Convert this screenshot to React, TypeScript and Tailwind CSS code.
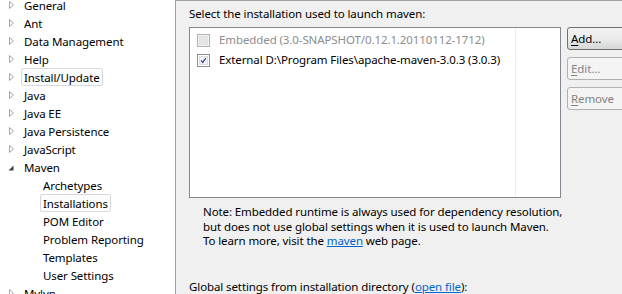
import React from "react";

const font = { fontFamily: '"Noto Sans", "Liberation Sans", sans-serif' };

type Node = { label: string; level: 0 | 1; state?: "closed" | "open"; selected?: boolean };

const nodes: Node[] = [
  { label: "General", level: 0, state: "closed" },
  { label: "Ant", level: 0, state: "closed" },
  { label: "Data Management", level: 0, state: "closed" },
  { label: "Help", level: 0, state: "closed" },
  { label: "Install/Update", level: 0, state: "closed", selected: true },
  { label: "Java", level: 0, state: "closed" },
  { label: "Java EE", level: 0, state: "closed" },
  { label: "Java Persistence", level: 0, state: "closed" },
  { label: "JavaScript", level: 0, state: "closed" },
  { label: "Maven", level: 0, state: "open" },
  { label: "Archetypes", level: 1 },
  { label: "Installations", level: 1, selected: true },
  { label: "POM Editor", level: 1 },
  { label: "Problem Reporting", level: 1 },
  { label: "Templates", level: 1 },
  { label: "User Settings", level: 1 },
  { label: "Mylyn", level: 0, state: "closed" },
];

// tree expander arrows, win7 style
const Arrow = ({ state }: { state?: "closed" | "open" }) => {
  if (!state) return <span className="w-[10px]" />;
  if (state === "open")
    return (
      <svg width="10" height="10" viewBox="0 0 10 10" className="shrink-0">
        <path d="M7.5 3.5 L7.5 8.5 L2.5 8.5 Z" fill="#404040" />
      </svg>
    );
  return (
    <svg width="10" height="10" viewBox="0 0 10 10" className="shrink-0">
      <path d="M3.5 1.5 L7.5 5 L3.5 8.5 Z" fill="none" stroke="#a6a6a6" strokeWidth="1" />
    </svg>
  );
};

const TreeRow = ({ node }: { node: Node }) => (
  <div className={`flex items-center h-[18px] whitespace-nowrap ${node.level === 1 ? "pl-[40px]" : "pl-[6px]"}`}>
    {node.level === 0 && (
      <span className="mr-[5px] flex items-center">
        <Arrow state={node.state} />
      </span>
    )}
    <span
      className={`px-[2px] h-[18px] leading-[17px] rounded-[2px] border ${
        node.selected ? "border-[#d9d9d9] bg-[#fbfcfd]" : "border-transparent"
      }`}
    >
      {node.label}
    </span>
  </div>
);

const CheckBox = ({ checked, disabled }: { checked?: boolean; disabled?: boolean }) => (
  <span
    className={`w-[13px] h-[13px] border flex items-center justify-center shrink-0 ${
      disabled ? "border-[#b1b1b1] bg-[#f4f4f4]" : "border-[#8e8f8f] bg-white"
    }`}
  >
    <span
      className={`w-[9px] h-[9px] border flex items-center justify-center ${
        disabled ? "border-[#e0e0e0] bg-[#e6e6e6]" : "border-[#dcdcdc] bg-[#f2f2f2]"
      }`}
    >
      {checked && (
        <svg width="9" height="9" viewBox="0 0 9 9">
          <path d="M1.5 4.5 L3.5 7 L7.5 1.5" fill="none" stroke="#2a4e8c" strokeWidth="1.6" />
        </svg>
      )}
    </span>
  </span>
);

const Button = ({
  mnemonic,
  rest,
  disabled,
}: {
  mnemonic: string;
  rest: string;
  disabled?: boolean;
}) => (
  <div
    className={`h-[23px] w-[75px] rounded-[3px] border flex items-center pl-[3px] ${
      disabled
        ? "border-[#adb2b5] bg-[#f4f4f4] text-[#838383]"
        : "border-[#707070] bg-gradient-to-b from-[#f2f2f2] via-[#ebebeb] to-[#d6d6d6] text-black"
    }`}
  >
    <span>
      <span className="underline underline-offset-2">{mnemonic}</span>
      {rest}
    </span>
  </div>
);

export default function App() {
  return (
    <div
      className="w-[622px] h-[294px] flex overflow-hidden text-[11.5px] tracking-[-0.1px] text-black"
      style={font}
    >
      <div className="w-[176px] shrink-0 bg-white border-r border-[#a0a0a0] overflow-hidden">
        <div className="-mt-[4px]">
          {nodes.map((n) => (
            <TreeRow key={n.label} node={n} />
          ))}
        </div>
      </div>
      <div className="flex-1 bg-[#f0f0f0] border-t border-[#a0a0a0] pl-[13px] pt-[4px] overflow-hidden whitespace-nowrap">
        <div className="h-[18px] leading-[18px]">Select the installation used to launch maven:</div>
        <div className="flex mt-[4px] gap-[6px]">
          <div className="w-[372px] h-[171px] shrink-0 border border-[#828790] bg-white flex">
            <div className="w-[325px] pt-[2px] pl-[7px]">
              <div className="flex items-center h-[20px] gap-[9px] text-[#8d8d8d]">
                <CheckBox disabled />
                <span>Embedded (3.0-SNAPSHOT/0.12.1.20110112-1712)</span>
              </div>
              <div className="flex items-center h-[20px] gap-[9px]">
                <CheckBox checked />
                <span>External D:\Program Files\apache-maven-3.0.3 (3.0.3)</span>
              </div>
            </div>
            <div className="w-px bg-[#e6eef9]" />
          </div>
          <div className="flex flex-col gap-[7px] w-[75px] shrink-0">
            <Button mnemonic="A" rest="dd..." />
            <Button mnemonic="E" rest="dit..." disabled />
            <Button mnemonic="R" rest="emove" disabled />
          </div>
        </div>
        <div className="pl-[14px] mt-[7px] leading-[14.5px]">
          <div>Note: Embedded runtime is always used for dependency resolution,</div>
          <div>but does not use global settings when it is used to launch Maven.</div>
          <div>
            To learn more, visit the <span className="text-[#0066cc] underline">maven</span> web page.
          </div>
        </div>
        <div className="mt-[31px] leading-[14.5px]">
          Global settings from installation directory (
          <span className="text-[#0066cc] underline">open file</span>):
        </div>
      </div>
    </div>
  );
}
